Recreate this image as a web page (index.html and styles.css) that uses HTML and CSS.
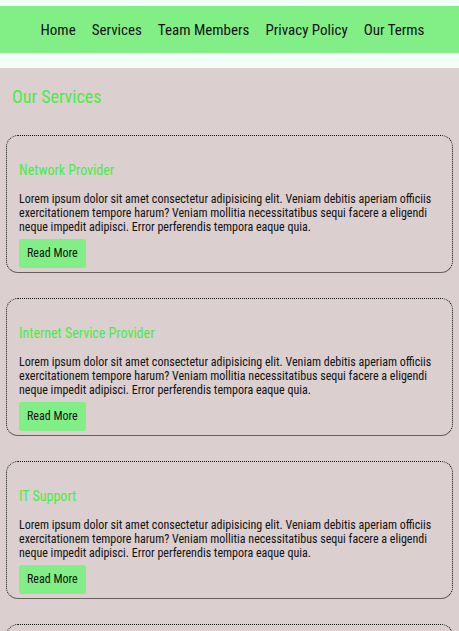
FILE: index.html
```html
<!DOCTYPE html>
<html lang="en">
<head>
<meta charset="utf-8">
<title>Our Services</title>
<link rel="stylesheet" href="styles.css">
</head>
<body>
<header class="site-header">
  <nav class="nav">
    <a href="#">Home</a>
    <a href="#">Services</a>
    <a href="#">Team Members</a>
    <a href="#">Privacy Policy</a>
    <a href="#">Our Terms</a>
  </nav>
</header>
<main class="services">
  <h2 class="services-title">Our Services</h2>
  <div class="card">
    <h3 class="card-title">Network Provider</h3>
    <p class="card-text">Lorem ipsum dolor sit amet consectetur adipisicing elit. Veniam debitis aperiam officiis exercitationem tempore harum? Veniam mollitia necessitatibus sequi facere a eligendi neque impedit adipisci. Error perferendis tempora eaque quia.</p>
    <a class="btn" href="#">Read More</a>
  </div>
  <div class="card">
    <h3 class="card-title">Internet Service Provider</h3>
    <p class="card-text">Lorem ipsum dolor sit amet consectetur adipisicing elit. Veniam debitis aperiam officiis exercitationem tempore harum? Veniam mollitia necessitatibus sequi facere a eligendi neque impedit adipisci. Error perferendis tempora eaque quia.</p>
    <a class="btn" href="#">Read More</a>
  </div>
  <div class="card">
    <h3 class="card-title">IT Support</h3>
    <p class="card-text">Lorem ipsum dolor sit amet consectetur adipisicing elit. Veniam debitis aperiam officiis exercitationem tempore harum? Veniam mollitia necessitatibus sequi facere a eligendi neque impedit adipisci. Error perferendis tempora eaque quia.</p>
    <a class="btn" href="#">Read More</a>
  </div>
  <div class="card">
    <h3 class="card-title">Cloud Hosting</h3>
    <p class="card-text">Lorem ipsum dolor sit amet consectetur adipisicing elit. Veniam debitis aperiam officiis exercitationem tempore harum? Veniam mollitia necessitatibus sequi facere a eligendi neque impedit adipisci. Error perferendis tempora eaque quia.</p>
    <a class="btn" href="#">Read More</a>
  </div>
</main>
</body>
</html>
```

FILE: styles.css
```css
* { box-sizing: border-box; }
html, body {
  margin: 0;
  padding: 0;
  background: #f3fff9;
}
body {
  font-family: Roboto, "Liberation Sans", sans-serif;
  font-stretch: 75%;
  color: #111;
}
.site-header {
  padding: 6px 0 15px;
}
.nav {
  background: #82ef86;
  height: 47px;
  padding-left: 6px;
  display: flex;
  justify-content: center;
  align-items: center;
  gap: 16px;
}
.nav a {
  color: #111;
  text-decoration: none;
  font-size: 15px;
}
.services {
  background: #dbcfcf;
  padding: 18px 6px 20px;
  min-height: 600px;
}
.services-title {
  margin: 0 0 27px 6px;
  font-size: 18px;
  font-weight: 400;
  color: #48ec48;
  line-height: 22px;
}
.card {
  border: 1px dotted #111;
  border-bottom: 1px solid #6b5d5d;
  border-radius: 12px;
  padding: 0 12px 4px;
  margin-bottom: 25px;
}
.card-title {
  margin: 26px 0 14px;
  font-size: 14px;
  line-height: 16px;
  font-weight: 400;
  color: #48ec48;
}
.card-text {
  margin: 0 0 5px;
  font-size: 12px;
  line-height: 14px;
}
.btn {
  display: block;
  width: fit-content;
  background: #82ef86;
  color: #111;
  text-decoration: none;
  font-size: 12px;
  line-height: 29px;
  padding: 0 8px;
  border-radius: 3px;
}
```
